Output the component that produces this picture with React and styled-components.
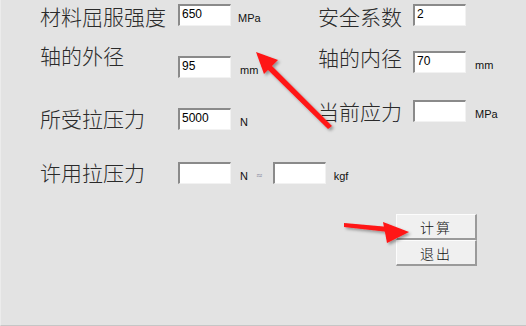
import React from "react";
import styled, { createGlobalStyle } from "styled-components";

const GlobalStyle = createGlobalStyle`
  html, body {
    margin: 0;
    padding: 0;
    background: #e3e3e3;
  }
`;

const Window = styled.div`
  position: relative;
  width: 526px;
  height: 326px;
  box-sizing: border-box;
  padding: 4px 0 0 39px;
  background: #e3e3e3;
  border-left: 1px solid #ececec;
  border-bottom: 1px solid #c6c6c6;
  display: grid;
  grid-template-columns: 278px 1fr;
  align-items: start;
  overflow: hidden;
`;

const Column = styled.div`
  display: flex;
  flex-direction: column;
`;

const Field = styled.div`
  display: flex;
  align-items: flex-start;
  margin-top: ${(p) => p.$gap || 0}px;
`;

const Label = styled.div`
  width: ${(p) => p.$width}px;
  flex-shrink: 0;
  font-family: "Noto Sans CJK SC", "Noto Sans", sans-serif;
  font-size: 21px;
  line-height: 24px;
  font-weight: 300;
  color: #2a2a2a;
  white-space: nowrap;
`;

const InputGroup = styled.div`
  display: flex;
  align-items: flex-end;
  margin-top: ${(p) => p.$shift || 0}px;
`;

const TextBox = styled.input`
  width: 53px;
  height: 22px;
  box-sizing: border-box;
  margin: 0;
  padding: 0 2px 3px;
  background: #fff;
  border-style: solid;
  border-width: 2px 1px 1px 2px;
  border-color: #8a8a8a #f2f2f2 #f2f2f2 #8a8a8a;
  font-family: "Liberation Sans", Arial, sans-serif;
  font-size: 12px;
  color: #000;
  outline: none;
`;

const Unit = styled.span`
  margin-left: ${(p) => p.$gap || 7}px;
  padding-bottom: 2px;
  font-family: "Liberation Sans", Arial, sans-serif;
  font-size: 11px;
  line-height: 12px;
  color: #111;
`;

const Approx = styled.span`
  margin: 0 10px 0 8px;
  padding-bottom: 3px;
  font-family: "DejaVu Sans", sans-serif;
  font-size: 8px;
  line-height: 10px;
  color: #8a8aa0;
`;

const ButtonStack = styled.div`
  display: flex;
  flex-direction: column;
  margin: 91px 0 0 78px;
  width: 81px;
`;

const Button = styled.button`
  width: 81px;
  height: 26px;
  margin: 0;
  padding: 0;
  box-sizing: border-box;
  background: #f0f0f0;
  border-style: solid;
  border-width: 1px 2px 2px 1px;
  border-color: #fcfcfc #9a9a9a #9a9a9a #fcfcfc;
  font-family: "Noto Sans CJK SC", sans-serif;
  font-size: 14px;
  font-weight: 300;
  letter-spacing: 2px;
  color: #111;
`;

const Overlay = styled.svg`
  position: absolute;
  left: 0;
  top: 0;
  pointer-events: none;
`;

function Arrows() {
  return (
    <Overlay width="526" height="326" viewBox="0 0 526 326">
      <defs>
        <filter id="sh" x="-20%" y="-20%" width="140%" height="140%">
          <feDropShadow dx="2" dy="2" stdDeviation="1.5" floodColor="#000" floodOpacity="0.35" />
        </filter>
      </defs>
      <g filter="url(#sh)" fill="#ff1414" stroke="none">
        <path d="M331 126 L327 129 L266 69 L270 65 Z" />
        <path d="M255 52 L277 60 L263 74 Z" />
        <path d="M343 223 L343 227 L388 232 L388 227 Z" />
        <path d="M408 232 L382 222 L386 243 Z" />
      </g>
    </Overlay>
  );
}

export default function App() {
  return (
    <>
      <GlobalStyle />
      <Window>
        <Column>
          <Field>
            <Label $width={138}>材料屈服强度</Label>
            <InputGroup>
              <TextBox readOnly value="650" />
              <Unit>MPa</Unit>
            </InputGroup>
          </Field>
          <Field $gap={15}>
            <Label $width={138}>轴的外径</Label>
            <InputGroup $shift={13}>
              <TextBox readOnly value="95" />
              <Unit $gap={9}>mm</Unit>
            </InputGroup>
          </Field>
          <Field $gap={28}>
            <Label $width={138}>所受拉压力</Label>
            <InputGroup $shift={2}>
              <TextBox readOnly value="5000" />
              <Unit $gap={9}>N</Unit>
            </InputGroup>
          </Field>
          <Field $gap={30}>
            <Label $width={138}>许用拉压力</Label>
            <InputGroup $shift={2}>
              <TextBox readOnly value="" />
              <Unit $gap={9}>N</Unit>
              <Approx>≈</Approx>
              <TextBox readOnly value="" />
              <Unit $gap={8}>kgf</Unit>
            </InputGroup>
          </Field>
        </Column>
        <Column>
          <Field>
            <Label $width={95}>安全系数</Label>
            <InputGroup>
              <TextBox readOnly value="2" />
            </InputGroup>
          </Field>
          <Field $gap={17}>
            <Label $width={95}>轴的内径</Label>
            <InputGroup $shift={6}>
              <TextBox readOnly value="70" />
              <Unit $gap={9}>mm</Unit>
            </InputGroup>
          </Field>
          <Field $gap={26}>
            <Label $width={95}>当前应力</Label>
            <InputGroup $shift={1}>
              <TextBox readOnly value="" />
              <Unit $gap={9}>MPa</Unit>
            </InputGroup>
          </Field>
          <ButtonStack>
            <Button>计算</Button>
            <Button>退出</Button>
          </ButtonStack>
        </Column>
        <Arrows />
      </Window>
    </>
  );
}
